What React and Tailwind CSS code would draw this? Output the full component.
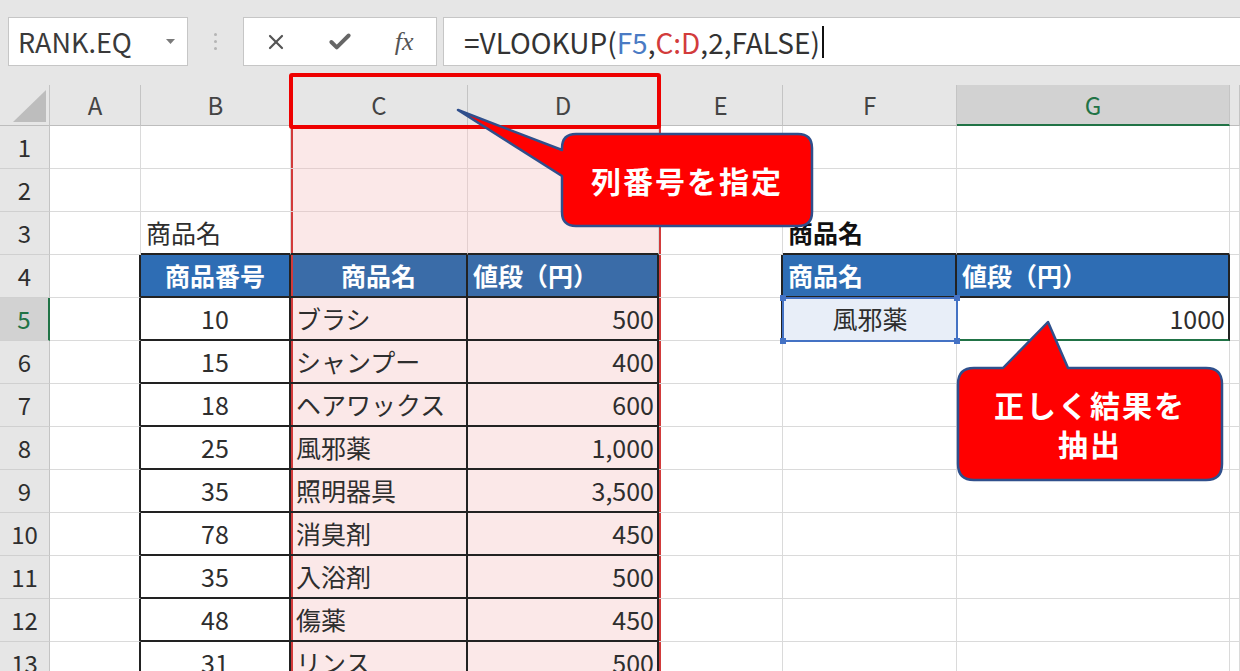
import React from "react";
import { X, Check } from "lucide-react";

const data = [
  [10, "ブラシ", "500"],
  [15, "シャンプー", "400"],
  [18, "ヘアワックス", "600"],
  [25, "風邪薬", "1,000"],
  [35, "照明器具", "3,500"],
  [78, "消臭剤", "450"],
  [35, "入浴剤", "500"],
  [48, "傷薬", "450"],
  [31, "リンス", "500"],
];

const BR = {
  g: "border-r border-r-[#dadada]",
  p: "border-r border-r-[#e3cfcf]",
  k: "border-r-2 border-r-[#222222]",
  h: "border-r border-r-[#c4c4c4]",
  green: "border-r-2 border-r-[#217346]",
  none: "",
};
const BB = {
  g: "border-b border-b-[#dadada]",
  p: "border-b border-b-[#e3cfcf]",
  k: "border-b-2 border-b-[#222222]",
  h: "border-b border-b-[#bdbdbd]",
  rh: "border-b border-b-[#d0d0d0]",
  green: "border-b-2 border-b-[#217346]",
  none: "",
};
const BG = {
  w: "bg-white",
  pink: "bg-[#fbe8e8]",
  blue: "bg-[#2e6db4]",
  blue2: "bg-[#3a6ca8]",
  hdr: "bg-[#e6e6e6]",
  hdrSel: "bg-[#d2d2d2]",
  sel: "bg-[#e8eef8]",
};
const AL = {
  l: "justify-start pl-[5px]",
  c: "justify-center",
  r: "justify-end pr-[3px]",
};
const TX = {
  n: "text-[#2e2e2e] font-normal",
  b: "text-[#111111] font-bold",
  wb: "text-white font-bold",
  hdr: "text-[#444444]",
  hdrSel: "text-[#217346]",
};

function spec(r, c) {
  if (r === 0) {
    if (c === 0) return { bg: "hdr", br: "h", bb: "h", corner: true };
    const letters = ["", "A", "B", "C", "D", "E", "F", "G", ""];
    if (c === 7) return { bg: "hdrSel", br: "h", bb: "green", text: "G", al: "c", tx: "hdrSel" };
    return { bg: "hdr", br: "h", bb: "h", text: letters[c], al: "c", tx: "hdr" };
  }
  if (c === 0) {
    if (r === 5) return { bg: "hdrSel", br: "green", bb: "rh", text: String(r), al: "c", tx: "hdrSel" };
    return { bg: "hdr", br: "h", bb: "rh", text: String(r), al: "c", tx: "n" };
  }
  const d = r >= 5 ? data[r - 5] : null;
  if (c === 1) return { bg: "w", br: r >= 4 ? "k" : "g", bb: "g" };
  if (c === 2) {
    if (r === 3) return { bg: "w", br: "g", bb: "k", text: "商品名", al: "l", tx: "n" };
    if (r === 4) return { bg: "blue", br: "k", bb: "k", text: "商品番号", al: "c", tx: "wb" };
    if (d) return { bg: "w", br: "k", bb: "k", text: String(d[0]), al: "c", tx: "n" };
    return { bg: "w", br: "g", bb: "g" };
  }
  if (c === 3) {
    if (r === 3) return { bg: "pink", br: "p", bb: "k", redL: true };
    if (r === 4) return { bg: "blue2", br: "k", bb: "k", text: "商品名", al: "c", tx: "wb", redL: true };
    if (d) return { bg: "pink", br: "k", bb: "k", text: d[1], al: "l", tx: "n", redL: true };
    return { bg: "pink", br: "p", bb: "p", redL: true };
  }
  if (c === 4) {
    if (r === 3) return { bg: "pink", br: "g", bb: "k" };
    if (r === 4) return { bg: "blue2", br: "k", bb: "k", text: "値段（円）", al: "l", tx: "wb" };
    if (d) return { bg: "pink", br: "k", bb: "k", text: d[2], al: "r", tx: "n" };
    return { bg: "pink", br: "g", bb: "p" };
  }
  if (c === 5) {
    if (r === 4 || r === 5) return { bg: "w", br: "k", bb: "g", redL: true };
    return { bg: "w", br: "g", bb: "g", redL: true };
  }
  if (c === 6) {
    if (r === 3) return { bg: "w", br: "g", bb: "k", text: "商品名", al: "l", tx: "b" };
    if (r === 4) return { bg: "blue", br: "k", bb: "k", text: "商品名", al: "l", tx: "wb" };
    if (r === 5) return { bg: "sel", br: "none", bb: "g", text: "風邪薬", al: "c", tx: "n" };
    return { bg: "w", br: "g", bb: "g" };
  }
  if (c === 7) {
    if (r === 3) return { bg: "w", br: "g", bb: "k" };
    if (r === 4) return { bg: "blue", br: "k", bb: "k", text: "値段（円）", al: "l", tx: "wb" };
    if (r === 5) return { bg: "w", br: "k", bb: "green", text: "1000", al: "r", tx: "n" };
    return { bg: "w", br: "g", bb: "g" };
  }
  return { bg: "w", br: "g", bb: "g" };
}

function Cell({ r, c }) {
  const s = spec(r, c);
  return (
    <div
      className={[
        "relative flex items-center overflow-hidden whitespace-nowrap",
        r === 0 || c === 0 ? "text-[24px]" : "text-[25px]",
        BG[s.bg],
        BR[s.br],
        BB[s.bb],
        s.al ? AL[s.al] : "",
        s.tx ? TX[s.tx] : "",
        s.redL ? "shadow-[inset_2px_0_0_#d23b3b]" : "",
      ].join(" ")}
    >
      {s.corner && (
        <svg className="absolute left-0 top-0" width="50" height="41" viewBox="0 0 50 41">
          <polygon points="13,37 46,37 46,5" fill="#bdbdbd" />
        </svg>
      )}
      {s.text}
    </div>
  );
}

export default function App() {
  const rows = Array.from({ length: 14 }, (_, i) => i);
  const cols = Array.from({ length: 9 }, (_, i) => i);
  return (
    <div className="relative w-[1240px] h-[671px] overflow-hidden bg-[#e6e6e6] font-['Noto_Sans_CJK_JP',sans-serif]">
      {/* formula bar */}
      <div className="flex h-[85px] items-start pt-[17px]">
        <div className="ml-[8px] flex h-[49px] w-[180px] items-center justify-between border border-[#c6c6c6] bg-white pl-[9px] pr-[12px]">
          <span className="text-[27px] leading-none text-[#3a3a3a]">RANK.EQ</span>
          <svg width="9" height="6" viewBox="0 0 9 6"><polygon points="0,0 9,0 4.5,5" fill="#7a7a7a" /></svg>
        </div>
        <div className="flex h-[49px] w-[55px] flex-col items-center justify-center gap-[4px]">
          <span className="h-[3px] w-[3px] rounded-full bg-[#b5b5b5]" />
          <span className="h-[3px] w-[3px] rounded-full bg-[#b5b5b5]" />
          <span className="h-[3px] w-[3px] rounded-full bg-[#b5b5b5]" />
        </div>
        <div className="flex h-[49px] w-[194px] items-center border border-[#c6c6c6] bg-white">
          <div className="flex w-[65px] justify-center"><X size={24} strokeWidth={2.2} color="#555555" /></div>
          <div className="flex w-[64px] justify-center"><Check size={26} strokeWidth={3.6} color="#666666" /></div>
          <div className="flex w-[64px] justify-center font-['Liberation_Serif',serif] text-[26px] italic text-[#555555]">fx</div>
        </div>
        <div className="ml-[6px] flex h-[49px] flex-1 items-center border border-r-0 border-[#c6c6c6] bg-white pl-[20px] text-[28px] text-[#333333]">
          <span>=VLOOKUP(</span>
          <span className="text-[#4a7bc4]">F5</span>
          <span>,</span>
          <span className="text-[#d23b3b]">C:D</span>
          <span>,2,FALSE)</span>
          <span className="ml-[2px] h-[32px] w-[2px] bg-[#111111]" />
        </div>
      </div>

      {/* sheet grid */}
      <div className="grid grid-cols-[50px_91px_150px_177px_191px_124px_174px_273px_1fr] grid-rows-[41px_repeat(13,43px)]">
        {rows.map((r) => cols.map((c) => <Cell key={r + "-" + c} r={r} c={c} />))}
      </div>

      {/* selection on F5 */}
      <div className="pointer-events-none absolute left-[782px] top-[297px] h-[45px] w-[176px] border-2 border-[#4472c4]">
        <span className="absolute -left-[4px] -top-[4px] h-[6px] w-[6px] bg-[#4472c4]" />
        <span className="absolute -right-[4px] -top-[4px] h-[6px] w-[6px] bg-[#4472c4]" />
        <span className="absolute -bottom-[4px] -left-[4px] h-[6px] w-[6px] bg-[#4472c4]" />
        <span className="absolute -bottom-[4px] -right-[4px] h-[6px] w-[6px] bg-[#4472c4]" />
      </div>

      {/* red highlight around C:D headers */}
      <div className="pointer-events-none absolute left-[289px] top-[73px] h-[56px] w-[372px] rounded-[3px] border-4 border-[#ee0000]" />

      {/* callouts */}
      <svg className="pointer-events-none absolute left-0 top-0" width="1240" height="671" viewBox="0 0 1240 671">
        <path
          d="M 576,134 H 798 Q 812,134 812,148 V 212 Q 812,226 798,226 H 576 Q 562,226 562,212 V 176 L 458,110 L 562,150 V 148 Q 562,134 576,134 Z"
          fill="#ff0000"
          stroke="#2f4f8c"
          strokeWidth="2.5"
          strokeLinejoin="round"
        />
        <path
          d="M 974,368 H 1003 L 1048,322 L 1068,368 H 1206 Q 1222,368 1222,384 V 464 Q 1222,480 1206,480 H 974 Q 958,480 958,464 V 384 Q 958,368 974,368 Z"
          fill="#ff0000"
          stroke="#2f4f8c"
          strokeWidth="2.5"
          strokeLinejoin="round"
        />
      </svg>
      <div className="pointer-events-none absolute left-[562px] top-[134px] flex h-[92px] w-[250px] items-center justify-center text-[30px] font-bold tracking-[2px] text-white">
        列番号を指定
      </div>
      <div className="pointer-events-none absolute left-[958px] top-[368px] flex h-[112px] w-[264px] flex-col items-center justify-center gap-[2px] text-[30px] font-bold leading-[37px] tracking-[2px] text-white">
        <span>正しく結果を</span>
        <span>抽出</span>
      </div>
    </div>
  );
}
